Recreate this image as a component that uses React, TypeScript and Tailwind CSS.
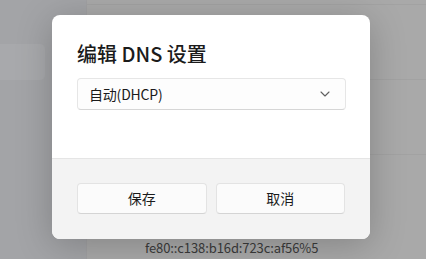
import React from 'react';

const FONT = "font-['Segoe_UI','Noto_Sans_CJK_SC',sans-serif]";

const DialogButton: React.FC<{ label: string }> = ({ label }) => (
  <button className="flex-1 h-[31px] rounded-[4px] border border-[#e3e3e3] border-b-[#d4d4d4] bg-[#fbfbfb] text-[14px] text-[#1b1b1b]">
    {label}
  </button>
);

export default function App() {
  return (
    <div className={`relative w-[426px] h-[259px] overflow-hidden flex bg-[#a9a9a9] ${FONT}`}>
      {/* dimmed sidebar */}
      <aside className="w-[87px] shrink-0 bg-[#a3a4a7] border-r border-[#a1a1a3] pt-[44px]">
        <div className="h-[36px] w-[51px] -ml-[6px] rounded-[5px] bg-[#a8a9ac]" />
      </aside>

      {/* dimmed content */}
      <main className="flex-1 flex flex-col">
        <div className="h-[5px] border-b border-[#a2a2a2]" />
        <div className="h-[75px] border-b border-[#a2a2a2]" />
        <div className="h-[75px] border-b border-[#a2a2a2]" />
        <div className="flex-1 pt-[84px] pl-[58px] text-[13px] leading-[18px] tracking-[-0.1px] text-[#3b3b3b] whitespace-nowrap">
          fe80::c138:b16d:723c:af56%5
        </div>
      </main>

      {/* dialog */}
      <div className="absolute left-[52px] top-[15px] w-[318px] h-[224px] rounded-[8px] bg-white overflow-hidden flex flex-col shadow-[0_6px_36px_rgba(0,0,0,0.22)]">
        <div className="h-[143px] px-[25px] pt-[25px]">
          <h2 className="text-[20px] leading-[28px] font-medium text-[#1b1b1b] mb-[10px]">编辑 DNS 设置</h2>
          <div className="h-[32px] w-[269px] rounded-[4px] border border-[#e6e6e6] border-b-[#d6d6d6] bg-[#fdfdfd] flex items-center justify-between pl-[11px] pr-[15px]">
            <span className="text-[14px] tracking-[-0.2px] text-[#1b1b1b]">自动(DHCP)</span>
            <svg width="10" height="6" viewBox="0 0 10 6" fill="none">
              <path d="M1 1 L5 5 L9 1" stroke="#606060" strokeWidth="1.1" strokeLinecap="round" strokeLinejoin="round" />
            </svg>
          </div>
        </div>
        <div className="flex-1 bg-[#f3f3f3] border-t border-[#e5e5e5] px-[25px] pt-[24px] flex gap-[9px] items-start">
          <DialogButton label="保存" />
          <DialogButton label="取消" />
        </div>
      </div>
    </div>
  );
}
